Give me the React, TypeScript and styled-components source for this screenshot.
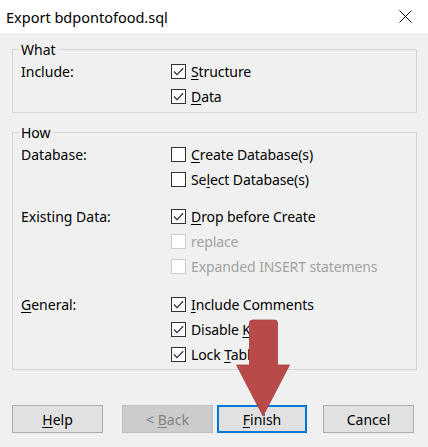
import React from "react";
import styled, { createGlobalStyle } from "styled-components";

const Global = createGlobalStyle`
  html, body { margin: 0; padding: 0; background: #f0f0f0; }
  body { font-family: "Noto Sans", "Open Sans", sans-serif; font-size: 14px; color: #000; }
  * { box-sizing: border-box; }
`;

const Window = styled.div`
  position: relative;
  width: 428px;
  height: 447px;
  background: #f0f0f0;
  overflow: hidden;
`;

const TitleBar = styled.div`
  height: 33px;
  background: #fff;
  display: flex;
  align-items: center;
  justify-content: space-between;
  padding: 0 16px 0 6px;
  font-size: 14.5px;
`;

const Close = styled.svg`
  width: 13px;
  height: 13px;
  display: block;
`;

const Body = styled.div`
  padding: 0 11px 0 12px;
`;

const Group = styled.fieldset<{ $mt: number; $pb: number }>`
  margin: ${(p) => p.$mt}px 0 0 0;
  padding: 0 0 ${(p) => p.$pb}px 8px;
  border: 1px solid #d6d6d6;
  display: flex;
  flex-direction: column;
  min-width: 0;
`;

const Legend = styled.legend`
  margin-left: -2px;
  padding: 0 2px;
  line-height: 19px;
  height: 19px;
`;

const Section = styled.div<{ $mt?: number }>`
  display: grid;
  grid-template-columns: 150px 1fr;
  margin-top: ${(p) => p.$mt ?? 0}px;
`;

const SectionLabel = styled.div`
  height: 25px;
  display: flex;
  align-items: center;
`;

const Options = styled.div`
  display: flex;
  flex-direction: column;
`;

const OptionRow = styled.div<{ $disabled?: boolean }>`
  height: 25px;
  display: flex;
  align-items: center;
  gap: 5px;
  color: ${(p) => (p.$disabled ? "#a2a2a2" : "#000")};
  white-space: nowrap;
  letter-spacing: -0.1px;
`;

const Box = styled.span<{ $disabled?: boolean }>`
  width: 15px;
  height: 15px;
  flex: none;
  border: 1px solid ${(p) => (p.$disabled ? "#cdcdcd" : "#333")};
  background: #fff;
  display: flex;
  align-items: center;
  justify-content: center;
`;

const Mn = styled.span`
  text-decoration: underline;
  text-underline-offset: 2px;
`;

const ButtonRow = styled.div`
  display: flex;
  margin-top: 35px;
`;

const Button = styled.div<{ $disabled?: boolean; $default?: boolean; $ml: number; $w: number }>`
  width: ${(p) => p.$w}px;
  height: 28px;
  margin-left: ${(p) => p.$ml}px;
  display: flex;
  align-items: center;
  justify-content: center;
  background: ${(p) => (p.$disabled ? "#cccccc" : "#e1e1e1")};
  border: ${(p) =>
    p.$default ? "2px solid #0078d7" : p.$disabled ? "1px solid #bfbfbf" : "1px solid #adadad"};
  color: ${(p) => (p.$disabled ? "#838383" : "#000")};
`;

const Arrow = styled.svg`
  position: absolute;
  left: 0;
  top: 0;
  width: 428px;
  height: 447px;
  pointer-events: none;
`;

const Check = () => (
  <svg width="13" height="13" viewBox="0 0 13 13">
    <path d="M2 6.5 L5 9.6 L11.2 3.2" fill="none" stroke="#333" strokeWidth="1.3" />
  </svg>
);

type Opt = { label: React.ReactNode; checked?: boolean; disabled?: boolean };

const Option = ({ label, checked, disabled }: Opt) => (
  <OptionRow $disabled={disabled}>
    <Box $disabled={disabled}>{checked && <Check />}</Box>
    <span>{label}</span>
  </OptionRow>
);

export default function App() {
  return (
    <Window>
      <Global />
      <TitleBar>
        <span>Export bdpontofood.sql</span>
        <Close viewBox="0 0 13 13">
          <path d="M0.5 0.5 L12.5 12.5 M12.5 0.5 L0.5 12.5" stroke="#000" strokeWidth="1" />
        </Close>
      </TitleBar>
      <Body>
        <Group $mt={7} $pb={3}>
          <Legend>What</Legend>
          <Section>
            <SectionLabel>Include:</SectionLabel>
            <Options>
              <Option checked label={<><Mn>S</Mn>tructure</>} />
              <Option checked label={<><Mn>D</Mn>ata</>} />
            </Options>
          </Section>
        </Group>
        <Group $mt={10} $pb={2}>
          <Legend>How</Legend>
          <Section>
            <SectionLabel>Database:</SectionLabel>
            <Options>
              <Option label={<><Mn>C</Mn>reate Database(s)</>} />
              <Option label={<>Se<Mn>l</Mn>ect Database(s)</>} />
            </Options>
          </Section>
          <Section $mt={12}>
            <SectionLabel>Existing Data:</SectionLabel>
            <Options>
              <Option checked label={<><Mn>D</Mn>rop before Create</>} />
              <Option disabled label="replace" />
              <Option disabled label="Expanded INSERT statemens" />
            </Options>
          </Section>
          <Section $mt={13}>
            <SectionLabel>
              <span><Mn>G</Mn>eneral:</span>
            </SectionLabel>
            <Options>
              <Option checked label={<><Mn>I</Mn>nclude Comments</>} />
              <Option checked label={<>Disable <Mn>K</Mn>eys</>} />
              <Option checked label={<>Lock <Mn>T</Mn>ables</>} />
            </Options>
          </Section>
        </Group>
        <ButtonRow>
          <Button $ml={0} $w={91}><span><Mn>H</Mn>elp</span></Button>
          <Button $ml={19} $w={91} $disabled><span>&lt; <Mn>B</Mn>ack</span></Button>
          <Button $ml={4} $w={90} $default><span><Mn>F</Mn>inish</span></Button>
          <Button $ml={16} $w={91}>Cancel</Button>
        </ButtonRow>
      </Body>
      <Arrow viewBox="0 0 428 447">
        <path
          d="M249.5 323 Q249.5 320 252.5 320 L274.5 320 Q277.5 320 277.5 323 L277.5 365 L289.5 365 L263 416 L236.5 365 L249.5 365 Z"
          fill="#b84a49"
          stroke="#a94240"
          strokeWidth="0.8"
          strokeLinejoin="round"
        />
      </Arrow>
    </Window>
  );
}
